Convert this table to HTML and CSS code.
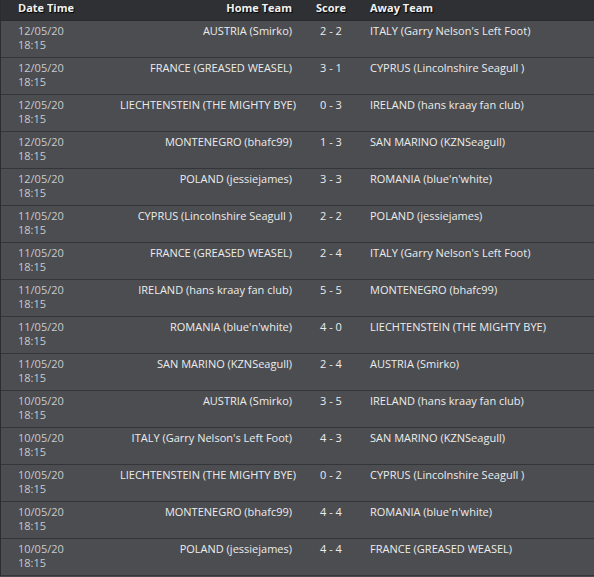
FILE: index.html
```html
<!DOCTYPE html>
<html>
<head>
<meta charset="utf-8">
<link rel="stylesheet" href="styles.css">
</head>
<body>
<div class="fixtures">
  <div class="row head">
    <div class="c-date">Date Time</div>
    <div class="c-home">Home Team</div>
    <div class="c-score">Score</div>
    <div class="c-away">Away Team</div>
  </div>
  <div class="row"><div class="c-date">12/05/20<br>18:15</div><div class="c-home">AUSTRIA (Smirko)</div><div class="c-score">2 - 2</div><div class="c-away">ITALY (Garry Nelson's Left Foot)</div></div>
  <div class="row"><div class="c-date">12/05/20<br>18:15</div><div class="c-home">FRANCE (GREASED WEASEL)</div><div class="c-score">3 - 1</div><div class="c-away">CYPRUS (Lincolnshire Seagull )</div></div>
  <div class="row"><div class="c-date">12/05/20<br>18:15</div><div class="c-home">LIECHTENSTEIN (THE MIGHTY BYE)</div><div class="c-score">0 - 3</div><div class="c-away">IRELAND (hans kraay fan club)</div></div>
  <div class="row"><div class="c-date">12/05/20<br>18:15</div><div class="c-home">MONTENEGRO (bhafc99)</div><div class="c-score">1 - 3</div><div class="c-away">SAN MARINO (KZNSeagull)</div></div>
  <div class="row"><div class="c-date">12/05/20<br>18:15</div><div class="c-home">POLAND (jessiejames)</div><div class="c-score">3 - 3</div><div class="c-away">ROMANIA (blue'n'white)</div></div>
  <div class="row"><div class="c-date">11/05/20<br>18:15</div><div class="c-home">CYPRUS (Lincolnshire Seagull )</div><div class="c-score">2 - 2</div><div class="c-away">POLAND (jessiejames)</div></div>
  <div class="row"><div class="c-date">11/05/20<br>18:15</div><div class="c-home">FRANCE (GREASED WEASEL)</div><div class="c-score">2 - 4</div><div class="c-away">ITALY (Garry Nelson's Left Foot)</div></div>
  <div class="row"><div class="c-date">11/05/20<br>18:15</div><div class="c-home">IRELAND (hans kraay fan club)</div><div class="c-score">5 - 5</div><div class="c-away">MONTENEGRO (bhafc99)</div></div>
  <div class="row"><div class="c-date">11/05/20<br>18:15</div><div class="c-home">ROMANIA (blue'n'white)</div><div class="c-score">4 - 0</div><div class="c-away">LIECHTENSTEIN (THE MIGHTY BYE)</div></div>
  <div class="row"><div class="c-date">11/05/20<br>18:15</div><div class="c-home">SAN MARINO (KZNSeagull)</div><div class="c-score">2 - 4</div><div class="c-away">AUSTRIA (Smirko)</div></div>
  <div class="row"><div class="c-date">10/05/20<br>18:15</div><div class="c-home">AUSTRIA (Smirko)</div><div class="c-score">3 - 5</div><div class="c-away">IRELAND (hans kraay fan club)</div></div>
  <div class="row"><div class="c-date">10/05/20<br>18:15</div><div class="c-home">ITALY (Garry Nelson's Left Foot)</div><div class="c-score">4 - 3</div><div class="c-away">SAN MARINO (KZNSeagull)</div></div>
  <div class="row"><div class="c-date">10/05/20<br>18:15</div><div class="c-home">LIECHTENSTEIN (THE MIGHTY BYE)</div><div class="c-score">0 - 2</div><div class="c-away">CYPRUS (Lincolnshire Seagull )</div></div>
  <div class="row"><div class="c-date">10/05/20<br>18:15</div><div class="c-home">MONTENEGRO (bhafc99)</div><div class="c-score">4 - 4</div><div class="c-away">ROMANIA (blue'n'white)</div></div>
  <div class="row"><div class="c-date">10/05/20<br>18:15</div><div class="c-home">POLAND (jessiejames)</div><div class="c-score">4 - 4</div><div class="c-away">FRANCE (GREASED WEASEL)</div></div>
</div>
</body>
</html>
```

FILE: styles.css
```css
html, body {
  margin: 0;
  padding: 0;
  background: #4b4d51;
}

.fixtures {
  width: 594px;
  box-sizing: border-box;
  border-left: 1px solid #2b2c2f;
  font-family: "Open Sans", sans-serif;
  font-size: 11px;
  line-height: 14px;
  color: #ececec;
}

.row {
  display: grid;
  grid-template-columns: 119px 182px 58px 1fr;
  height: 37px;
  box-sizing: border-box;
  padding-top: 3px;
  border-bottom: 1px solid #333538;
  background: #4b4d51;
  white-space: nowrap;
}

.row.head {
  height: 21px;
  padding-top: 1px;
  background: #2f3033;
  border-bottom: 1px solid #2a2b2e;
  font-weight: bold;
  color: #f2f2f2;
  text-shadow: 1px 1px 1px #000;
}

.c-date {
  padding-left: 17px;
  color: #c9cacc;
}

.head .c-date { color: #f2f2f2; }

.c-home {
  text-align: right;
  padding-right: 10px;
}

.c-score {
  text-align: center;
}

.c-away {
  padding-left: 10px;
}
```
